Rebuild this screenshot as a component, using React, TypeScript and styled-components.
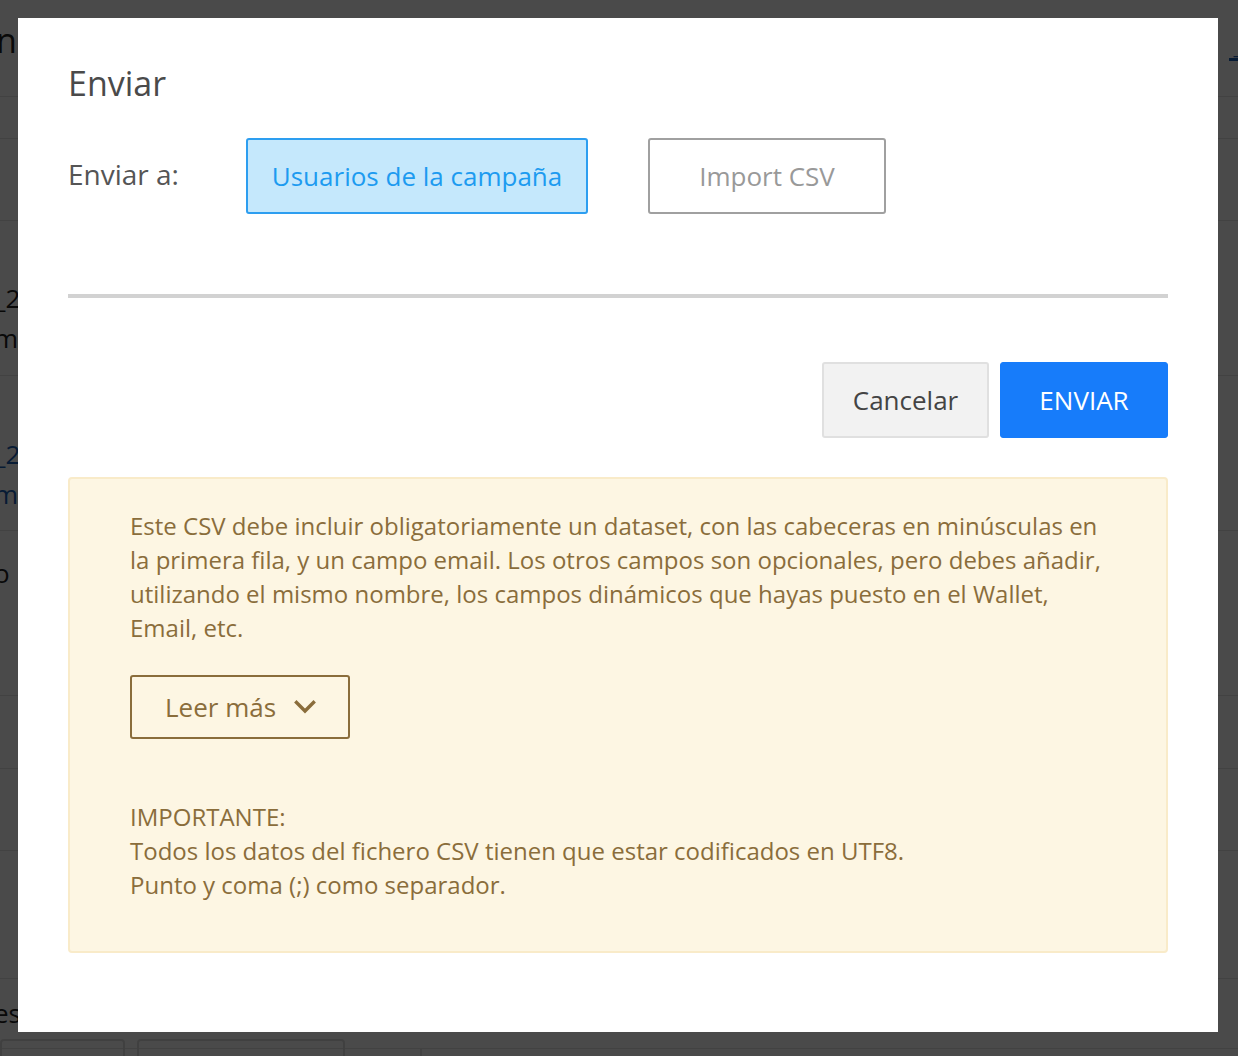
import React from "react";
import styled, { createGlobalStyle } from "styled-components";

const Global = createGlobalStyle`
  html, body { margin: 0; padding: 0; }
  body {
    font-family: "Open Sans", "Noto Sans", "Liberation Sans", sans-serif;
    background: #ffffff;
    overflow: hidden;
  }
  * { box-sizing: border-box; }
`;

/* ---------- page behind the modal ---------- */
const Page = styled.div`
  width: 1238px;
  height: 1056px;
  background: #ffffff;
  display: flex;
  flex-direction: column;
  overflow: hidden;
`;

const PageHeader = styled.div`
  flex-shrink: 0;
  height: 97px;
  display: flex;
  align-items: flex-start;
  justify-content: space-between;
  border-bottom: 1px solid #e3e3e3;
  padding-top: 18px;
`;

const HeaderTitle = styled.div`
  font-size: 34px;
  line-height: 44px;
  color: #222;
  margin-left: -4px;
`;

const HeaderLink = styled.div`
  font-size: 24px;
  line-height: 26px;
  color: #1a5fb4;
  border-bottom: 3px solid #1a5fb4;
  padding: 0 4px;
  margin-right: -10px;
  margin-top: 14px;
`;

const Row = styled.div<{ $h: number; $pt?: number }>`
  flex-shrink: 0;
  height: ${(p) => p.$h}px;
  border-bottom: 1px solid #e3e3e3;
  display: flex;
  flex-direction: column;
  padding-top: ${(p) => p.$pt ?? 0}px;
  font-size: 26px;
  line-height: 40px;
  color: #222;
`;

const RowText = styled.div<{ $link?: boolean }>`
  color: ${(p) => (p.$link ? "#1a5fb4" : "#222")};
  margin-left: -6px;
`;

const BottomBar = styled.div`
  flex-shrink: 0;
  display: flex;
  gap: 12px;
  align-items: flex-start;
  margin-top: -10px;
`;

const GhostBtn = styled.div<{ $w: number }>`
  width: ${(p) => p.$w}px;
  height: 70px;
  border: 2px solid #ddd;
  border-radius: 4px;
`;

const ColumnEdge = styled.div`
  width: 2px;
  height: 80px;
  background: #e3e3e3;
  margin-left: 63px;
  margin-top: 10px;
`;

/* ---------- overlay + modal ---------- */
const Overlay = styled.div`
  position: fixed;
  inset: 0;
  background: rgba(0, 0, 0, 0.71);
`;

const Modal = styled.div`
  position: fixed;
  top: 18px;
  left: 18px;
  width: 1200px;
  background: #ffffff;
  padding: 44px 50px 79px 50px;
  display: flex;
  flex-direction: column;
  & > * { flex-shrink: 0; }
`;

const Title = styled.h2`
  margin: 0;
  font-size: 34px;
  font-weight: 400;
  line-height: 42px;
  color: #4a4a4a;
`;

const SendRow = styled.div`
  display: flex;
  align-items: center;
  margin-top: 34px;
`;

const Label = styled.div`
  font-size: 28px;
  color: #555;
  width: 178px;
  margin-top: -4px;
`;

const Choice = styled.button<{ $active?: boolean; $w: number }>`
  width: ${(p) => p.$w}px;
  height: 76px;
  font-family: inherit;
  font-size: 26px;
  border-radius: 3px;
  margin-right: 60px;
  cursor: pointer;
  background: ${(p) => (p.$active ? "#c5e8fc" : "#ffffff")};
  border: ${(p) => (p.$active ? "2px solid #2d9ef0" : "2px solid #a0a0a0")};
  color: ${(p) => (p.$active ? "#1d9bf0" : "#999999")};
  padding: 0;
`;

const Divider = styled.hr`
  margin: 80px 0 0 0;
  border: none;
  height: 4px;
  background: #d2d2d2;
`;

const Footer = styled.div`
  display: flex;
  justify-content: flex-end;
  gap: 11px;
  margin-top: 64px;
`;

const FooterBtn = styled.button<{ $primary?: boolean }>`
  width: ${(p) => (p.$primary ? 168 : 167)}px;
  height: 76px;
  font-family: inherit;
  font-size: 26px;
  border-radius: 3px;
  cursor: pointer;
  padding: 0;
  background: ${(p) => (p.$primary ? "#177cfa" : "#f2f2f2")};
  color: ${(p) => (p.$primary ? "#ffffff" : "#444")};
  border: ${(p) => (p.$primary ? "1px solid #177cfa" : "2px solid #e0e0e0")};
`;

const Alert = styled.div`
  margin-top: 39px;
  background: #fdf6e3;
  border: 2px solid #f9ebc9;
  border-radius: 4px;
  padding: 30px 60px 49px 60px;
  color: #8a6d3b;
  font-size: 24px;
  line-height: 34px;
  height: 476px;
`;

const Para = styled.p`
  margin: 0;
`;

const ReadMore = styled.button`
  margin-top: 30px;
  width: 220px;
  height: 64px;
  background: transparent;
  border: 2px solid #8a6d3b;
  border-radius: 3px;
  font-family: inherit;
  font-size: 26px;
  color: #8a6d3b;
  display: flex;
  align-items: center;
  padding: 0 0 0 33px;
  gap: 18px;
  cursor: pointer;
`;

const Important = styled.div`
  margin-top: 61px;
`;

export default function App() {
  return (
    <>
      <Global />
      <Page>
        <PageHeader>
          <HeaderTitle>ne</HeaderTitle>
          <HeaderLink>_</HeaderLink>
        </PageHeader>
        <Row $h={42} />
        <Row $h={82} />
        <Row $h={155} $pt={57}>
          <RowText>_2</RowText>
          <RowText>m</RowText>
        </Row>
        <Row $h={155} $pt={58}>
          <RowText $link>_2</RowText>
          <RowText $link>m</RowText>
        </Row>
        <Row $h={165} $pt={22}>
          <RowText>o</RowText>
        </Row>
        <Row $h={73} />
        <Row $h={82} />
        <Row $h={128} />
        <Row $h={70} $pt={14}>
          <RowText>es</RowText>
        </Row>
        <BottomBar>
          <GhostBtn $w={125} />
          <GhostBtn $w={208} />
          <ColumnEdge />
        </BottomBar>
      </Page>
      <Overlay />
      <Modal>
        <Title>Enviar</Title>
        <SendRow>
          <Label>Enviar a:</Label>
          <Choice $active $w={342}>
            Usuarios de la campaña
          </Choice>
          <Choice $w={238}>Import CSV</Choice>
        </SendRow>
        <Divider />
        <Footer>
          <FooterBtn>Cancelar</FooterBtn>
          <FooterBtn $primary>ENVIAR</FooterBtn>
        </Footer>
        <Alert>
          <Para>
            Este CSV debe incluir obligatoriamente un dataset, con las cabeceras en minúsculas en la
            primera fila, y un campo email. Los otros campos son opcionales, pero debes añadir,
            utilizando el mismo nombre, los campos dinámicos que hayas puesto en el Wallet, Email,
            etc.
          </Para>
          <ReadMore>
            Leer más
            <svg width="22" height="14" viewBox="0 0 22 14" fill="none">
              <path
                d="M2.5 2.5 L11 11 L19.5 2.5"
                stroke="#8a6d3b"
                strokeWidth="3.4"
                strokeLinecap="square"
              />
            </svg>
          </ReadMore>
          <Important>
            <Para>IMPORTANTE:</Para>
            <Para>Todos los datos del fichero CSV tienen que estar codificados en UTF8.</Para>
            <Para>Punto y coma (;) como separador.</Para>
          </Important>
        </Alert>
      </Modal>
    </>
  );
}
